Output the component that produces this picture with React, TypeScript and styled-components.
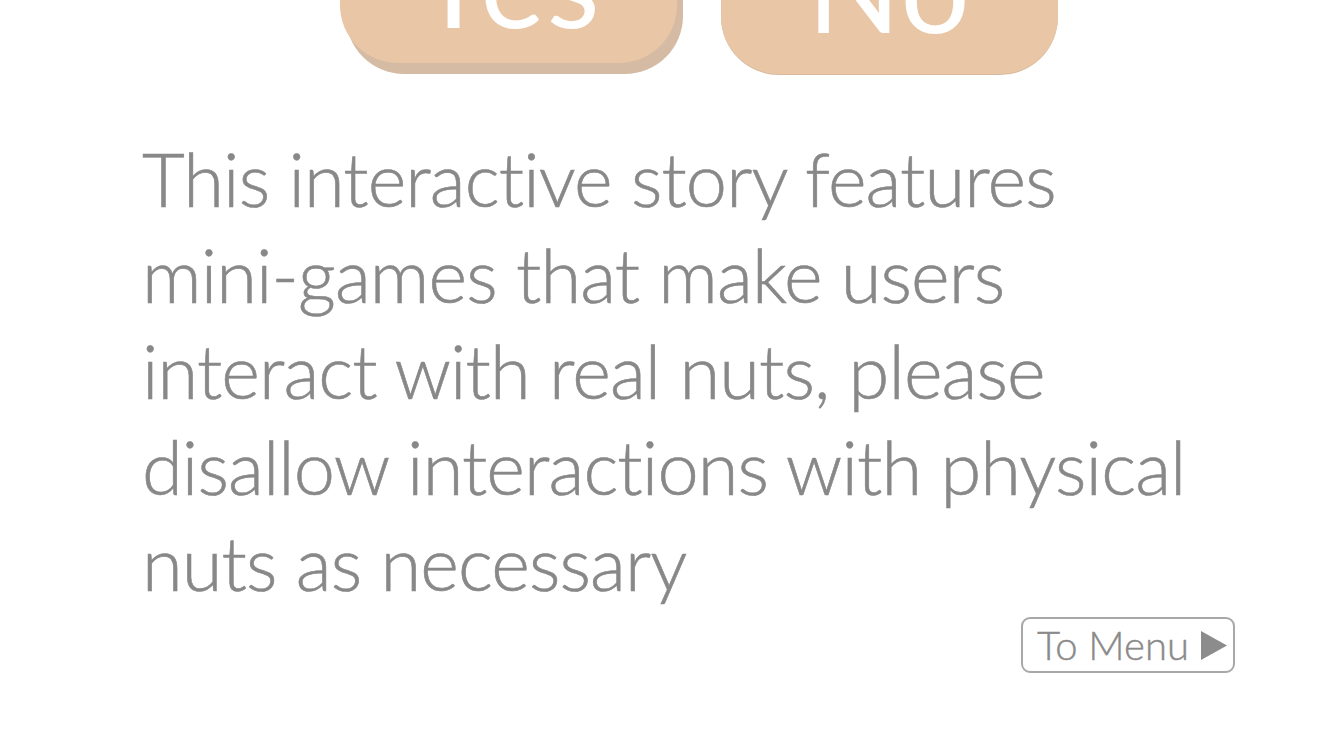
import React from "react";
import styled, { createGlobalStyle, css } from "styled-components";

const GlobalStyle = createGlobalStyle`
  html, body {
    margin: 0;
    padding: 0;
    background: #ffffff;
  }
  body {
    font-family: Lato, "Open Sans", "Noto Sans", sans-serif;
  }
`;

const Page = styled.div`
  width: 1334px;
  height: 750px;
  overflow: hidden;
  background: #ffffff;
  display: flex;
  flex-direction: column;
`;

const ChoiceRow = styled.div`
  display: flex;
  gap: 44px;
  padding-left: 340px;
  margin-top: -67px;
`;

const ChoiceButton = styled.button<{ $pressed?: boolean; $lift: number }>`
  width: 337px;
  height: 130px;
  flex: none;
  border: none;
  border-radius: 58px;
  background: #e9c7a6;
  color: #ffffff;
  font-family: Lato, "Open Sans", sans-serif;
  font-size: 122px;
  line-height: 1;
  letter-spacing: 2px;
  display: flex;
  align-items: flex-end;
  justify-content: center;
  padding: 0 0 ${(p) => p.$lift}px;
  cursor: pointer;
  ${(p) =>
    p.$pressed
      ? css`
          transform: translateY(11px);
          box-shadow: 0 1px 0 #d9b99d;
        `
      : css`
          box-shadow: 6px 11px 0 #d5bba4;
        `}
`;

const Story = styled.p`
  margin: 68px 0 0 142px;
  font-family: Lato, "Open Sans", sans-serif;
  font-weight: 300;
  font-size: 74px;
  line-height: 96px;
  letter-spacing: -0.9px;
  font-variant-ligatures: none;
  -webkit-text-stroke: 0.6px #888888;
  color: #888888;
  white-space: nowrap;
`;

const Footer = styled.div`
  display: flex;
  justify-content: flex-end;
  padding-right: 99px;
  margin-top: 6px;
`;

const MenuButton = styled.button`
  box-sizing: border-box;
  width: 214px;
  height: 56px;
  border: 2px solid #a8a8a8;
  border-radius: 9px;
  background: #ffffff;
  color: #8a8a8a;
  font-family: Lato, "Open Sans", sans-serif;
  font-weight: 300;
  font-size: 40px;
  line-height: 1;
  -webkit-text-stroke: 0.4px #8a8a8a;
  display: flex;
  align-items: center;
  gap: 12px;
  padding: 0 0 0 14px;
  cursor: pointer;
`;

const Arrow = () => (
  <svg width="26" height="29" viewBox="0 0 26 29" aria-hidden="true">
    <polygon points="0,0 26,14.5 0,29" fill="#8c8c8c" />
  </svg>
);

export default function App() {
  return (
    <>
      <GlobalStyle />
      <Page>
        <ChoiceRow>
          <ChoiceButton $lift={21}>Yes</ChoiceButton>
          <ChoiceButton $pressed $lift={27}>
            No
          </ChoiceButton>
        </ChoiceRow>
        <Story>
          This interactive story features
          <br />
          mini-games that make users
          <br />
          interact with real nuts, please
          <br />
          disallow interactions with physical
          <br />
          nuts as necessary
        </Story>
        <Footer>
          <MenuButton>
            To Menu
            <Arrow />
          </MenuButton>
        </Footer>
      </Page>
    </>
  );
}
